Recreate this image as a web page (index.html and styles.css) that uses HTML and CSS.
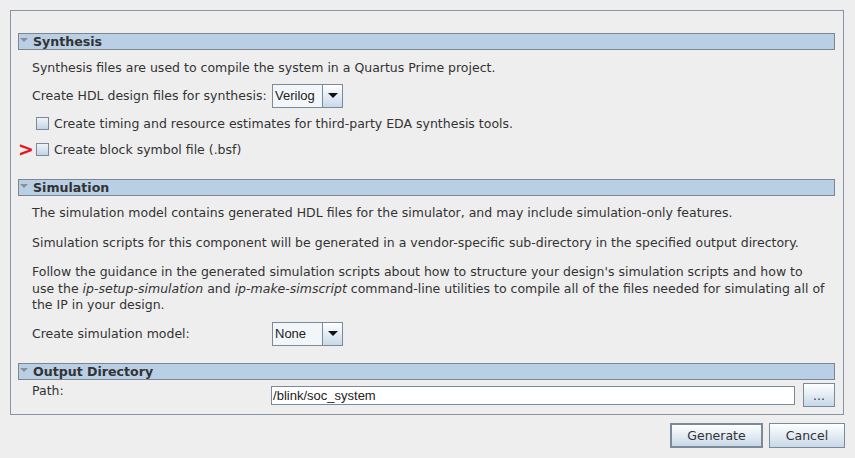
FILE: index.html
```html
<!DOCTYPE html>
<html>
<head>
<meta charset="utf-8">
<link rel="stylesheet" href="styles.css">
</head>
<body>
<div class="window">
  <div class="panel">
    <div class="section-header"><span class="tri"></span><span class="title">Synthesis</span></div>
    <div class="section synth">
      <p class="line l-synth">Synthesis files are used to compile the system in a Quartus Prime project.</p>
      <div class="row hdl-row">
        <span class="label">Create HDL design files for synthesis:</span>
        <div class="combo"><span class="combo-text">Verilog</span><span class="combo-btn"><span class="down"></span></span></div>
      </div>
      <div class="check-row cr1"><span class="marker"></span><span class="cb"></span><span class="cb-label">Create timing and resource estimates for third-party EDA synthesis tools.</span></div>
      <div class="check-row cr2"><span class="marker red">&gt;</span><span class="cb"></span><span class="cb-label">Create block symbol file (.bsf)</span></div>
    </div>
    <div class="section-header"><span class="tri"></span><span class="title">Simulation</span></div>
    <div class="section sim">
      <p class="line l-sim1">The simulation model contains generated HDL files for the simulator, and may include simulation-only features.</p>
      <p class="line l-sim2">Simulation scripts for this component will be generated in a vendor-specific sub-directory in the specified output directory.</p>
      <p class="line l-sim3">Follow the guidance in the generated simulation scripts about how to structure your design's simulation scripts and how to<br>use the <i>ip-setup-simulation</i> and <i>ip-make-simscript</i> command-line utilities to compile all of the files needed for simulating all of<br>the IP in your design.</p>
      <div class="row sim-row">
        <span class="label">Create simulation model:</span>
        <div class="combo"><span class="combo-text">None</span><span class="combo-btn"><span class="down"></span></span></div>
      </div>
    </div>
    <div class="section-header"><span class="tri"></span><span class="title">Output Directory</span></div>
    <div class="section out">
      <div class="path-row">
        <span class="path-label">Path:</span>
        <div class="path-field">/blink/soc_system</div>
        <button class="btn browse">...</button>
      </div>
    </div>
  </div>
  <div class="footer">
    <button class="btn default">Generate</button>
    <button class="btn cancel">Cancel</button>
  </div>
</div>
</body>
</html>
```
FILE: styles.css
```css
* { box-sizing: border-box; }
html, body { margin: 0; padding: 0; }
body {
  background: #eeeeee;
  font-family: "DejaVu Sans", sans-serif;
  font-size: 12.5px;
  color: #333333;
  width: 855px;
  height: 458px;
  overflow: hidden;
}
.window { padding: 10px 11px 0 10px; }
.panel {
  height: 405px;
  border: 1px solid #8794a3;
  padding: 22px 8px 0 7px;
  display: flex;
  flex-direction: column;
}
.section-header {
  height: 17px;
  background: #b8cfe5;
  border: 1px solid #7d858d;
  display: flex;
  align-items: center;
  font-weight: bold;
  font-size: 12.6px;
  color: #333;
}
.tri {
  width: 0; height: 0;
  border-left: 4px solid transparent;
  border-right: 4px solid transparent;
  border-top: 4px solid #8a8f96;
  margin: 0 5px 3px 1px;
}
.title { line-height: 15px; }
.section { padding-left: 14px; }
.line { margin: 0; line-height: 16.5px; white-space: nowrap; }
.l-synth { margin-top: 10px; }
.row { display: flex; align-items: center; }
.hdl-row { margin-top: 7px; height: 24px; }
.label { width: 240px; }
.combo {
  display: flex;
  height: 24px;
  width: 71px;
}
.combo-text {
  flex: 1;
  border: 1px solid #7a8a99;
  background: #f3f6f9;
  padding-left: 2px;
  line-height: 22px;
  font-size: 13px;
  color: #222;
  font-family: "Liberation Sans", sans-serif;
}
.combo-btn {
  width: 20px;
  border: 1px solid #7a8a99;
  border-left: none;
  background: linear-gradient(#ffffff, #c9d9e9);
  display: flex;
  align-items: center;
  justify-content: center;
}
.down {
  width: 0; height: 0;
  border-left: 5px solid transparent;
  border-right: 5px solid transparent;
  border-top: 5px solid #111;
}
.check-row {
  display: flex;
  align-items: center;
  height: 26px;
  margin-left: -15px;
}
.cr1 { margin-top: 3px; }
.marker { width: 19px; display: inline-block; }
.red {
  color: #e8141a;
  font-weight: bold;
  font-size: 19px;
  line-height: 14px;
  text-align: left;
  padding-left: 1px;
  margin-top: -1px;
  font-family: "DejaVu Sans", sans-serif;
}
.cb {
  width: 13px; height: 13px;
  border: 1px solid #7a8a99;
  background: linear-gradient(#eef3f8, #c3d4e5);
}
.cb-label { margin-left: 5px; }
.synth { height: 129px; }
.sim { height: 167px; }
.l-sim1 { margin-top: 9px; }
.l-sim2 { margin-top: 13px; }
.l-sim3 { margin-top: 13px; }
.sim-row { margin-top: 8px; height: 24px; }
.out { padding-left: 14px; }
.path-row { display: flex; align-items: flex-start; margin-top: 3px; }
.path-label { width: 240px; line-height: 16px; }
.path-field {
  width: 526px;
  height: 19px;
  margin-top: 3px;
  border: 1px solid #7a8a99;
  background: #fff;
  font-family: "Liberation Sans", sans-serif;
  font-size: 13px;
  line-height: 17px;
  padding-left: 1px;
  color: #222;
}
.btn {
  font-family: "DejaVu Sans", sans-serif;
  font-size: 12.5px;
  color: #333;
  border: 1px solid #7a8a99;
  background: linear-gradient(#ffffff, #c8d8e9);
  padding: 0;
  margin: 0;
}
.browse { width: 32px; height: 24px; margin-left: 8px; }
.footer {
  display: flex;
  justify-content: flex-end;
  gap: 6px;
  margin-top: 8px;
  margin-right: -1px;
}
.default { width: 93px; height: 25px; border: 2px solid #7a8a99; }
.cancel { width: 76px; height: 25px; }
```
